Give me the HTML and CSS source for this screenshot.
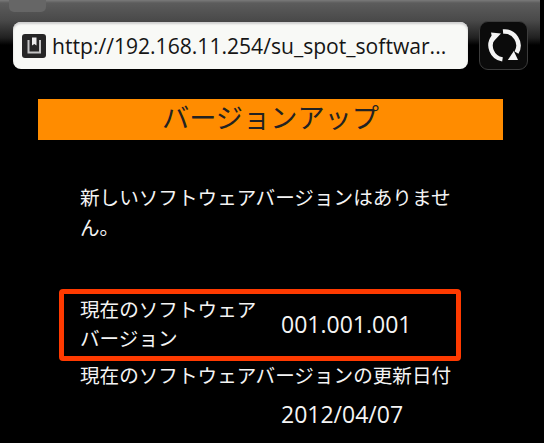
FILE: index.html
```html
<!DOCTYPE html>
<html lang="ja">
<head>
    <meta charset="UTF-8">
    <title>バージョンアップ</title>
    <link rel="stylesheet" href="styles.css">
</head>
<body>
    <div class="toolbar">
        <div class="tab-stub"></div>
        <div class="url-bar">
            <svg class="site-icon" width="24" height="24" viewBox="0 0 24 24">
                <rect x="0" y="0" width="24" height="24" rx="3" fill="#262626"/>
                <path d="M6.5 6V18.5H18V6" fill="none" stroke="#c4c4c4" stroke-width="2"/>
                <path d="M10 3.5h4.5v8l-2.2 -1.5l-2.3 1.5z" fill="#ececec"/>
            </svg>
            <span class="url-text">http://192.168.11.254/su_spot_softwar...</span>
        </div>
        <div class="reload-btn">
            <svg width="34" height="34" viewBox="0 0 34 34">
                <path d="M6.5 8A14 14 0 0 0 15.5 30.4" fill="none" stroke="#f4f4f4" stroke-width="4.5"/>
                <path d="M16 2.6A14 14 0 0 1 29.5 23.6" fill="none" stroke="#f4f4f4" stroke-width="4.5"/>
                <path d="M4 3.5L14 4.5L6 13z" fill="#f4f4f4"/>
                <path d="M20.8 31H31L26.8 22z" fill="#f4f4f4"/>
            </svg>
        </div>
    </div>

    <div class="content">
        <h1 class="page-title">バージョンアップ</h1>
        <p class="message">新しいソフトウェアバージョンはありません。</p>

        <div class="info-row highlight">
            <div class="info-label">現在のソフトウェアバージョン</div>
            <div class="info-value">001.001.001</div>
        </div>
        <div class="info-heading">現在のソフトウェアバージョンの更新日付</div>
        <div class="info-date">2012/04/07</div>
    </div>
</body>
</html>
```

FILE: styles.css
```css
html, body {
    height: 100%;
}

body {
    margin: 0;
    background-color: #000;
    color: #f4f4f4;
    font-family: "Open Sans", "Noto Sans CJK JP", sans-serif;
    overflow: hidden;
}

.toolbar {
    position: relative;
    display: flex;
    align-items: center;
    gap: 11px;
    width: 540px;
    height: 76px;
    padding: 15px 0 0 13px;
    box-sizing: border-box;
    background: linear-gradient(#7a7a7a 0, #5c5c5c 3px, #4a4a4a 20px, #202020 38px, #000 45px);
}

.tab-stub {
    position: absolute;
    top: 0;
    left: 9px;
    width: 37px;
    height: 12px;
    background-color: #666;
    border-radius: 0 0 5px 5px;
}

.url-bar {
    display: flex;
    align-items: center;
    width: 455px;
    height: 47px;
    padding-left: 9px;
    box-sizing: border-box;
    background-color: #f8f9f6;
    border-radius: 8px;
    box-shadow: inset 0 2px 2px #cfcfcf;
}

.site-icon {
    flex: none;
    margin-right: 6px;
}

.url-text {
    color: #151515;
    font-size: 21.1px;
    white-space: nowrap;
}

.reload-btn {
    display: flex;
    align-items: center;
    justify-content: center;
    width: 49px;
    height: 49px;
    box-sizing: border-box;
    background-color: #0b0b0b;
    border: 1px solid #3c3c3c;
    border-radius: 9px;
}

.content {
    padding: 23px 41px 0 38px;
}

.page-title {
    margin: 0;
    height: 41px;
    background-color: #ff8c00;
    color: #222;
    font-size: 27.2px;
    font-weight: normal;
    line-height: 37px;
    text-align: center;
}

.message {
    width: 380px;
    margin: 43px 0 0 42px;
    font-size: 19.6px;
    line-height: 30px;
}

.info-row {
    display: grid;
    grid-template-columns: 201px auto;
    align-items: center;
    width: 402px;
    height: 72px;
    margin: 46px 0 0 21px;
    padding: 0 0 2px 16px;
    box-sizing: border-box;
    border: 5px solid #ff3a00;
    border-radius: 4px;
}

.info-label {
    width: 185px;
    font-size: 19.6px;
    line-height: 29px;
}

.info-value {
    font-size: 23px;
}

.info-heading {
    margin-left: 42px;
    font-size: 19.6px;
    line-height: 29px;
    white-space: nowrap;
}

.info-date {
    margin: 9px 0 0 243px;
    font-size: 23px;
    line-height: 30px;
}
```
